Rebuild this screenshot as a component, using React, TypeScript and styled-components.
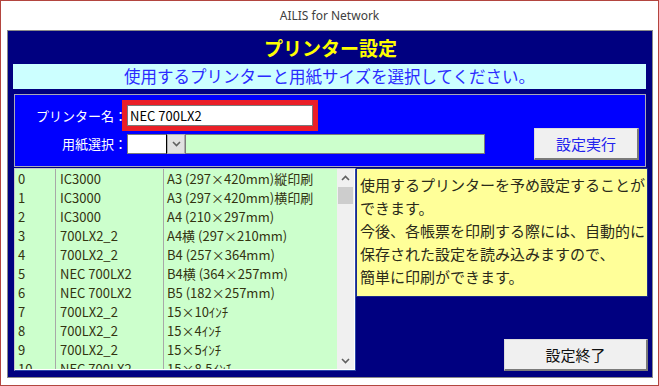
import React from "react";
import styled, { createGlobalStyle } from "styled-components";

const GlobalStyle = createGlobalStyle`
  html, body {
    margin: 0;
    padding: 0;
    background: #ffffff;
  }
  body {
    font-family: "Noto Sans CJK JP", "Noto Sans", sans-serif;
  }
`;

type PaperRow = {
    no: number;
    printer: string;
    paper: string;
};

const paperRows: PaperRow[] = [
    { no: 0, printer: "IC3000", paper: "A3 (297×420mm)縦印刷" },
    { no: 1, printer: "IC3000", paper: "A3 (297×420mm)横印刷" },
    { no: 2, printer: "IC3000", paper: "A4 (210×297mm)" },
    { no: 3, printer: "700LX2_2", paper: "A4横 (297×210mm)" },
    { no: 4, printer: "700LX2_2", paper: "B4 (257×364mm)" },
    { no: 5, printer: "NEC 700LX2", paper: "B4横 (364×257mm)" },
    { no: 6, printer: "NEC 700LX2", paper: "B5 (182×257mm)" },
    { no: 7, printer: "700LX2_2", paper: "15×10ｲﾝﾁ" },
    { no: 8, printer: "700LX2_2", paper: "15×4ｲﾝﾁ" },
    { no: 9, printer: "700LX2_2", paper: "15×5ｲﾝﾁ" },
    { no: 10, printer: "NEC 700LX2", paper: "15×8.5ｲﾝﾁ" }
];

const infoLines = [
    "使用するプリンターを予め設定することが",
    "できます。",
    "今後、各帳票を印刷する際には、自動的に",
    "保存された設定を読み込みますので、",
    "簡単に印刷ができます。"
];

function Chevron({ up }: { up?: boolean }) {
    return (
        <svg width="9" height="6" viewBox="0 0 9 6">
            <polyline
                points={up ? "1,5 4.5,1.5 8,5" : "1,1 4.5,4.5 8,1"}
                fill="none"
                stroke="#606060"
                strokeWidth="1.6"
            />
        </svg>
    );
}

export default function App() {
    return (
        <>
            <GlobalStyle />
            <Window>
                <TitleBar>AILIS for Network</TitleBar>
                <Body>
                    <Panel>
                        <Heading>プリンター設定</Heading>
                        <Instruction>使用するプリンターと用紙サイズを選択してください。</Instruction>
                        <FormPanel>
                            <FormGrid>
                                <FieldLabel>プリンター名：</FieldLabel>
                                <PrinterInput readOnly value="NEC 700LX2" />
                                <FieldLabel>用紙選択：</FieldLabel>
                                <ComboRow>
                                    <SelectBox />
                                    <DropButton>
                                        <Chevron />
                                    </DropButton>
                                    <PaperField />
                                </ComboRow>
                            </FormGrid>
                            <ActionButton $color="#2222ee" $width={105}>設定実行</ActionButton>
                        </FormPanel>
                        <BottomRow>
                            <ListFrame>
                                <ListRows>
                                    {paperRows.map((row) => (
                                        <ListRow key={row.no}>
                                            <Cell>{row.no}</Cell>
                                            <Cell>{row.printer}</Cell>
                                            <Cell>{row.paper}</Cell>
                                        </ListRow>
                                    ))}
                                </ListRows>
                                <ScrollBar>
                                    <ScrollArrow>
                                        <Chevron up />
                                    </ScrollArrow>
                                    <Thumb />
                                    <ScrollTrack />
                                    <ScrollArrow>
                                        <Chevron />
                                    </ScrollArrow>
                                </ScrollBar>
                            </ListFrame>
                            <SideColumn>
                                <InfoBox>
                                    {infoLines.map((line) => (
                                        <div key={line}>{line}</div>
                                    ))}
                                </InfoBox>
                                <ActionButton $color="#111111" $width={144}>設定終了</ActionButton>
                            </SideColumn>
                        </BottomRow>
                    </Panel>
                </Body>
            </Window>
        </>
    );
}

// styles

const Window = styled.div`
    width: 659px;
    height: 386px;
    box-sizing: border-box;
    border: 1px solid #b3453f;
    background: #ffffff;
    display: flex;
    flex-direction: column;
`;
const TitleBar = styled.div`
    height: 29px;
    display: flex;
    align-items: center;
    justify-content: center;
    font-family: "Noto Sans", "Liberation Sans", sans-serif;
    font-size: 12px;
    color: #404040;
`;
const Body = styled.div`
    flex: 1;
    display: flex;
    padding: 0 5px 7px 6px;
    min-height: 0;
`;
const Panel = styled.div`
    flex: 1;
    display: flex;
    flex-direction: column;
    background: #000080;
    border: 1px solid #8a8a8a;
    padding: 0 4px 6px 5px;
`;
const Heading = styled.div`
    height: 33px;
    line-height: 33px;
    text-align: center;
    color: #ffff00;
    font-size: 19px;
    font-weight: 700;
`;
const Instruction = styled.div`
    height: 25px;
    line-height: 25px;
    margin-right: 2px;
    background: #ccffff;
    color: #2b2bff;
    font-size: 16.5px;
    text-align: center;
    white-space: nowrap;
`;
const FormPanel = styled.div`
    height: 73px;
    box-sizing: border-box;
    margin: 5px 2px 0 1px;
    background: #0000ff;
    border: 1px solid #a8a8b8;
    padding: 10px 6px 6px 0;
    display: flex;
    justify-content: space-between;
    align-items: flex-end;
`;
const FormGrid = styled.div`
    align-self: flex-start;
    display: grid;
    grid-template-columns: 112px auto;
    grid-template-rows: 21px 20px;
    row-gap: 8px;
    align-items: center;
`;
const FieldLabel = styled.div`
    justify-self: end;
    color: #ffffff;
    font-size: 13px;
    line-height: 20px;
    white-space: nowrap;
`;
const PrinterInput = styled.input`
    width: 186px;
    height: 21px;
    box-sizing: border-box;
    margin: 0;
    padding: 0 0 0 2px;
    border: 1px solid #7a7a7a;
    background: #ffffff;
    font-family: "Noto Sans CJK JP", "Noto Sans", sans-serif;
    font-size: 13px;
    color: #000000;
    outline: 5px solid #ea1f27;
`;
const ComboRow = styled.div`
    display: flex;
    height: 20px;
`;
const SelectBox = styled.div`
    width: 40px;
    box-sizing: border-box;
    background: #ffffff;
    border: 1px solid #7a7a7a;
    border-right: 1px solid #000000;
`;
const DropButton = styled.div`
    width: 18px;
    box-sizing: border-box;
    background: #e1e1e1;
    border: 1px solid #adadad;
    display: flex;
    align-items: center;
    justify-content: center;
`;
const PaperField = styled.div`
    width: 300px;
    box-sizing: border-box;
    background: #ccffcc;
    border: 1px solid #7a7a7a;
`;
const ActionButton = styled.div<{ $color: string; $width: number }>`
    width: ${(p) => p.$width}px;
    height: 32px;
    box-sizing: border-box;
    background: #f0f0f0;
    border: 1px solid #dcdcdc;
    border-right: 2px solid #7a7a7a;
    border-bottom: 2px solid #7a7a7a;
    color: ${(p) => p.$color};
    font-size: 15px;
    display: flex;
    align-items: center;
    justify-content: center;
`;
const BottomRow = styled.div`
    flex: 1;
    display: flex;
    margin: 1px 0 0 1px;
    min-height: 0;
`;
const ListFrame = styled.div`
    width: 342px;
    box-sizing: border-box;
    border: 1px solid #2c47a8;
    border-left-color: #c8c8c8;
    border-top-color: #c8c8c8;
    background: #ccffcc;
    display: flex;
    overflow: hidden;
    box-shadow: inset -1px -1px 0 #ffffff;
    padding: 0 1px 1px 0;
`;
const ListRows = styled.div`
    flex: 1;
    overflow: hidden;
`;
const ListRow = styled.div`
    display: grid;
    grid-template-columns: 41px 108px 1fr;
    height: 19px;
    line-height: 19px;
    font-size: 13px;
    color: #333310;
    white-space: nowrap;
`;
const Cell = styled.div`
    padding-left: 3px;
    border-right: 1px solid #a8a8a8;
    overflow: hidden;

    &:nth-child(2) {
        padding-left: 4px;
    }
    &:last-child {
        border-right: none;
    }
`;
const ScrollBar = styled.div`
    width: 17px;
    background: #f0f0f0;
    display: flex;
    flex-direction: column;
    align-items: center;
`;
const ScrollArrow = styled.div`
    width: 17px;
    height: 17px;
    display: flex;
    align-items: center;
    justify-content: center;
`;
const Thumb = styled.div`
    width: 15px;
    height: 17px;
    margin-top: 1px;
    background: #cdcdcd;
`;
const ScrollTrack = styled.div`
    flex: 1;
`;
const SideColumn = styled.div`
    flex: 1;
    display: flex;
    flex-direction: column;
    justify-content: space-between;
    align-items: flex-end;
`;
const InfoBox = styled.div`
    align-self: stretch;
    height: 129px;
    box-sizing: border-box;
    background: #ffff99;
    border: 1px solid #1a2a8a;
    padding: 4px 0 0 3px;
    font-size: 15px;
    line-height: 23px;
    color: #2a2a1a;
    white-space: nowrap;
    overflow: hidden;
`;
